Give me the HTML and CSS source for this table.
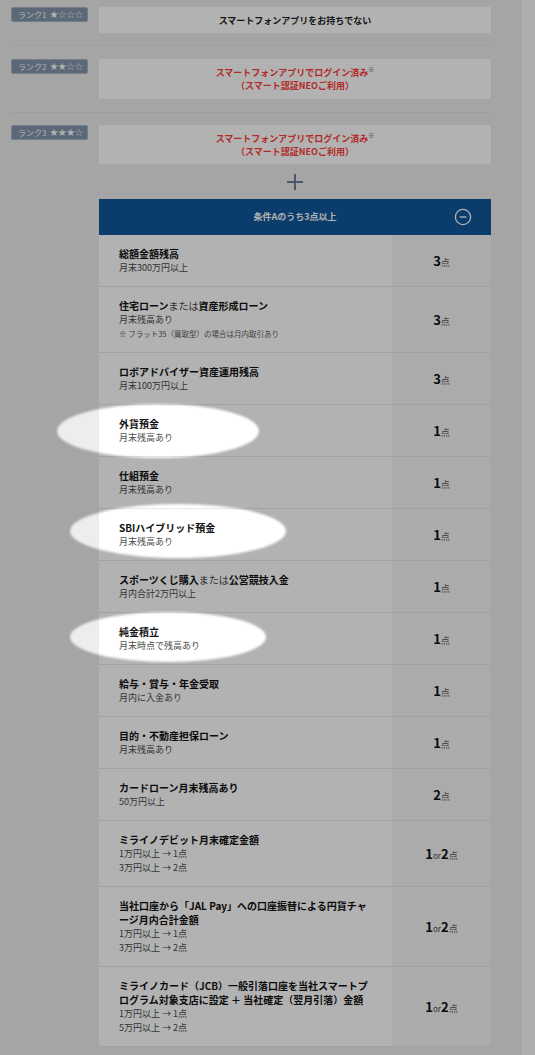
FILE: index.html
```html
<!DOCTYPE html>
<html lang="ja">
<head>
<meta charset="utf-8">
<title>スマートプログラム ランク条件</title>
<link rel="stylesheet" href="styles.css">
</head>
<body>
<div class="page">
  <main class="main">
    <section class="ranks">
      <div class="rank rank-1">
        <span class="badge">ランク1 <span class="stars">★☆☆☆</span></span>
        <div class="rank-box box-1"><p class="cond">スマートフォンアプリをお持ちでない</p></div>
      </div>
      <div class="rank rank-2">
        <span class="badge">ランク2 <span class="stars">★★☆☆</span></span>
        <div class="rank-box box-2"><p class="cond red">スマートフォンアプリでログイン済み<sup>※</sup><br>（スマート認証NEOご利用）</p></div>
      </div>
      <div class="rank rank-3">
        <span class="badge">ランク3 <span class="stars">★★★☆</span></span>
        <div class="rank-box box-3"><p class="cond red">スマートフォンアプリでログイン済み<sup>※</sup><br>（スマート認証NEOご利用）</p></div>
      </div>
    </section>

    <div class="col">
      <div class="plus">
        <svg width="18" height="18" viewBox="0 0 18 18"><path d="M9 1v16M1 9h16" stroke="#6b8199" stroke-width="2" fill="none"/></svg>
      </div>

      <section class="table">
        <div class="thead">
          <span></span>
          <span class="thead-title">条件Aのうち3点以上</span>
          <svg class="minus" width="18" height="18" viewBox="0 0 18 18"><circle cx="9" cy="9" r="7.6" stroke="#fff" stroke-width="1.3" fill="none"/><path d="M5.6 9h6.8" stroke="#fff" stroke-width="1.4"/></svg>
        </div>

        <div class="row">
          <div class="item"><p class="title">総額金額残高</p><p class="sub">月末300万円以上</p></div>
          <div class="pts"><b>3</b><small>点</small></div>
        </div>
        <div class="row">
          <div class="item"><p class="title">住宅ローン<span class="norm">または</span>資産形成ローン</p><p class="sub">月末残高あり</p><p class="note">※ フラット35（買取型）の場合は月内取引あり</p></div>
          <div class="pts"><b>3</b><small>点</small></div>
        </div>
        <div class="row">
          <div class="item"><p class="title">ロボアドバイザー資産運用残高</p><p class="sub">月末100万円以上</p></div>
          <div class="pts"><b>3</b><small>点</small></div>
        </div>
        <div class="row">
          <div class="item"><p class="title">外貨預金</p><p class="sub">月末残高あり</p></div>
          <div class="pts"><b>1</b><small>点</small></div>
        </div>
        <div class="row">
          <div class="item"><p class="title">仕組預金</p><p class="sub">月末残高あり</p></div>
          <div class="pts"><b>1</b><small>点</small></div>
        </div>
        <div class="row">
          <div class="item"><p class="title">SBIハイブリッド預金</p><p class="sub">月末残高あり</p></div>
          <div class="pts"><b>1</b><small>点</small></div>
        </div>
        <div class="row">
          <div class="item"><p class="title">スポーツくじ購入<span class="norm">または</span>公営競技入金</p><p class="sub">月内合計2万円以上</p></div>
          <div class="pts"><b>1</b><small>点</small></div>
        </div>
        <div class="row">
          <div class="item"><p class="title">純金積立</p><p class="sub">月末時点で残高あり</p></div>
          <div class="pts"><b>1</b><small>点</small></div>
        </div>
        <div class="row">
          <div class="item"><p class="title">給与・賞与・年金受取</p><p class="sub">月内に入金あり</p></div>
          <div class="pts"><b>1</b><small>点</small></div>
        </div>
        <div class="row">
          <div class="item"><p class="title">目的・不動産担保ローン</p><p class="sub">月末残高あり</p></div>
          <div class="pts"><b>1</b><small>点</small></div>
        </div>
        <div class="row">
          <div class="item"><p class="title">カードローン月末残高あり</p><p class="sub">50万円以上</p></div>
          <div class="pts"><b>2</b><small>点</small></div>
        </div>
        <div class="row">
          <div class="item"><p class="title">ミライノデビット月末確定金額</p><p class="sub">1万円以上 → 1点</p><p class="sub">3万円以上 → 2点</p></div>
          <div class="pts"><b>1</b><small class="or">or</small><b>2</b><small>点</small></div>
        </div>
        <div class="row">
          <div class="item"><p class="title">当社口座から「JAL Pay」への口座振替による円貨チャ<br>ージ月内合計金額</p><p class="sub">1万円以上 → 1点</p><p class="sub">3万円以上 → 2点</p></div>
          <div class="pts"><b>1</b><small class="or">or</small><b>2</b><small>点</small></div>
        </div>
        <div class="row">
          <div class="item"><p class="title">ミライノカード（JCB）一般引落口座を当社スマートプ<br>ログラム対象支店に設定 ＋ 当社確定（翌月引落）金額</p><p class="sub">1万円以上 → 1点</p><p class="sub">5万円以上 → 2点</p></div>
          <div class="pts"><b>1</b><small class="or">or</small><b>2</b><small>点</small></div>
        </div>
      </section>
    </div>
  </main>
  <div class="strip"></div>
</div>

<svg class="overlay" width="535" height="1055" viewBox="0 0 535 1055" aria-hidden="true">
  <defs>
    <filter id="soft" x="-20%" y="-50%" width="140%" height="200%"><feGaussianBlur stdDeviation="1.2"/></filter>
    <mask id="holes" maskUnits="userSpaceOnUse" x="0" y="0" width="535" height="1055">
      <rect width="535" height="1055" fill="#fff"/>
      <g filter="url(#soft)" fill="#000">
        <ellipse cx="158" cy="431" rx="101" ry="27"/>
        <ellipse cx="178" cy="531" rx="108" ry="27"/>
        <ellipse cx="168" cy="637" rx="98" ry="25"/>
      </g>
    </mask>
  </defs>
  <rect width="535" height="1055" fill="rgba(0,0,0,0.3)" mask="url(#holes)"/>
</svg>
</body>
</html>
```

FILE: styles.css
```css
* { box-sizing: border-box; margin: 0; padding: 0; }

html, body {
  width: 535px;
  height: 1055px;
  overflow: hidden;
}

body {
  position: relative;
  background: #ededed;
  font-family: "Noto Sans CJK JP", "Noto Sans", sans-serif;
  color: #1e1e1e;
}

.page {
  display: flex;
  height: 1055px;
}

.main { width: 522px; }

.strip {
  width: 13px;
  background: #fafafa;
}

/* dimming layer with spotlight holes, lies over the whole page */
.overlay {
  position: absolute;
  top: 0;
  left: 0;
  pointer-events: none;
}

/* rank rows */
.ranks { padding: 0 31px 0 11px; }

.rank {
  display: flex;
  align-items: flex-start;
  gap: 11px;
  border-bottom: 1px solid #e2e2e2;
}
.rank-1 { padding: 7px 0 12px; }
.rank-2 { padding: 13px 0 13px; }
.rank-3 { padding: 12px 0 0; border-bottom: 0; }

.badge {
  flex: none;
  display: flex;
  align-items: center;
  gap: 3px;
  width: 77px;
  height: 15px;
  padding-left: 6px;
  background: #8195ab;
  border: 1px solid #a7b5c4;
  border-radius: 2px;
  color: #fff;
  font-size: 8px;
  line-height: 13px;
  white-space: nowrap;
}
.stars {
  font-family: "DejaVu Sans", sans-serif;
  font-size: 10px;
  line-height: 13px;
  letter-spacing: -0.6px;
}

.rank-box {
  flex: 1;
  display: flex;
  flex-direction: column;
  justify-content: center;
  background: #fff;
  text-align: center;
}
.box-1 { height: 26px; }
.box-2 { height: 40px; }
.box-3 { height: 39px; }

.cond {
  font-size: 9px;
  font-weight: 700;
  line-height: 13px;
}
.cond.red { color: #ff3d38; }
.cond sup {
  font-size: 6px;
  color: #555;
  vertical-align: 4px;
  line-height: 0;
}

/* main column */
.col {
  padding-left: 99px;
  width: 491px;
}

.plus {
  height: 35px;
  display: flex;
  align-items: center;
  justify-content: center;
  padding-top: 1px;
}

.thead {
  height: 36px;
  display: grid;
  grid-template-columns: 1fr auto 1fr;
  align-items: center;
  padding: 0 19px;
  background: #0f569b;
  color: #fff;
}
.thead-title {
  font-size: 9px;
  font-weight: 700;
  line-height: 14px;
}
.minus { justify-self: end; }

.row {
  display: grid;
  grid-template-columns: 293px 99px;
  border-bottom: 1px solid #e8e8e8;
}

.item {
  padding: 12px 18px 11px 20px;
  background: #fff;
}

.title {
  font-size: 10px;
  font-weight: 700;
  line-height: 14px;
  color: #111;
  white-space: nowrap;
}
.title .norm {
  font-weight: 400;
  color: #444;
}

.sub {
  font-size: 9px;
  line-height: 14px;
  color: #4a4a4a;
}

.note {
  font-size: 7.5px;
  line-height: 14px;
  color: #5a5a5a;
}

.pts {
  display: flex;
  align-items: baseline;
  justify-content: center;
  align-self: stretch;
  align-content: center;
  flex-wrap: wrap;
  background: #f5f5f5;
  color: #111;
}
.pts b {
  font-size: 13px;
  font-weight: 700;
  line-height: 16px;
}
.pts small {
  font-size: 9px;
  color: #5a5a5a;
}
.pts small.or {
  font-size: 8px;
  color: #4a4a4a;
}
```
